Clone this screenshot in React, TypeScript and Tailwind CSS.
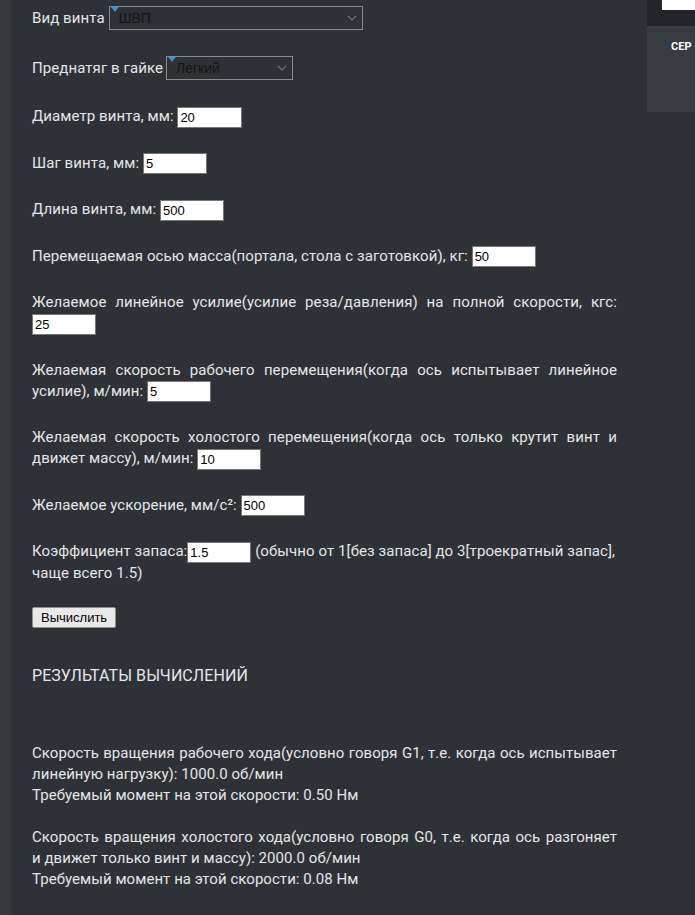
import React from "react";

const inputCls =
  "inline-block align-middle w-[64px] h-[21px] bg-white border border-[#767676] text-black text-[13px] pl-[2px] leading-[19px] tracking-normal [font-family:'Liberation_Sans',Arial,sans-serif]";

function Field({ value, className = "" }: { value: string; className?: string }) {
  return <span className={inputCls + " " + className}>{value}</span>;
}

function Select({ value, width }: { value: string; width: string }) {
  return (
    <span
      className={
        "relative inline-flex items-center align-middle h-[24px] border border-[#8a8a8a] text-[#141414] text-[14px] pl-[9px] tracking-normal [font-family:'Liberation_Sans',Arial,sans-serif] " +
        width
      }
    >
      <span className="absolute left-[1px] top-0 w-0 h-0 border-l-[4px] border-r-[4px] border-t-[5px] border-l-transparent border-r-transparent border-t-[#3d8fcf]" />
      <span>{value}</span>
      <svg
        className="absolute right-[5px] top-[8px]"
        width="10"
        height="6"
        viewBox="0 0 10 6"
        fill="none"
      >
        <path d="M1 1l4 4 4-4" stroke="#6f6f6f" strokeWidth="1.2" />
      </svg>
    </span>
  );
}

export default function App() {
  return (
    <div className="flex w-[695px] h-[915px] overflow-hidden bg-[#2e3135] [font-family:Roboto,'Noto_Sans',sans-serif]">
      <div className="w-[11px] shrink-0 bg-[#36393c]" />
      <main className="w-[636px] shrink-0 pl-[21px] pr-[30px] pt-[5px] text-[15px] text-[#e4e6e8] leading-[21px] tracking-[0.08px]">
        <div className="flex flex-col gap-[25px]">
          <div className="h-[26px] flex items-center gap-[4px]">
            <span>Вид винта</span>
            <Select value="ШВП" width="w-[254px]" />
          </div>
          <div className="h-[26px] flex items-center gap-[3px] -mt-[1px]">
            <span>Преднатяг в гайке</span>
            <Select value="Легкий" width="w-[127px]" />
          </div>
          <p>
            Диаметр винта, мм: <Field value="20" className="w-[65px]" />
          </p>
          <p>
            Шаг винта, мм: <Field value="5" />
          </p>
          <p>
            Длина винта, мм: <Field value="500" />
          </p>
          <p>
            Перемещаемая осью масса(портала, стола с заготовкой), кг: <Field value="50" />
          </p>
          <p className="text-justify">
            Желаемое линейное усилие(усилие реза/давления) на полной скорости, кгс:{" "}
            <Field value="25" />
          </p>
          <p className="text-justify">
            Желаемая скорость рабочего перемещения(когда ось испытывает линейное
            усилие), м/мин: <Field value="5" />
          </p>
          <p className="text-justify">
            Желаемая скорость холостого перемещения(когда ось только крутит винт и
            движет массу), м/мин: <Field value="10" />
          </p>
          <p>
            Желаемое ускорение, мм/с²: <Field value="500" />
          </p>
          <p>
            Коэффициент запаса:<Field value="1.5" /> (обычно от 1[без запаса] до
            3[троекратный запас], чаще всего 1.5)
          </p>
          <div className="leading-[0px] -mt-[2px]">
            <button className="h-[21px] px-[8px] bg-[#e9e9e9] border border-[#8f8f8f] rounded-[2px] text-black text-[13px] leading-[19px] tracking-normal [font-family:'Liberation_Sans',Arial,sans-serif]">
              Вычислить
            </button>
          </div>
        </div>
        <h3 className="mt-[37px] text-[16px] leading-[22px]">РЕЗУЛЬТАТЫ ВЫЧИСЛЕНИЙ</h3>
        <div className="mt-[56px] leading-[21px] tracking-[0.05px]">
          <p className="text-justify [text-align-last:justify]">
            Скорость вращения рабочего хода(условно говоря G1, т.е. когда ось испытывает
          </p>
          <p>линейную нагрузку): 1000.0 об/мин</p>
          <p>Требуемый момент на этой скорости: 0.50 Нм</p>
          <p className="h-[21px]" />
          <p className="text-justify [text-align-last:justify]">
            Скорость вращения холостого хода(условно говоря G0, т.е. когда ось разгоняет
          </p>
          <p>и движет только винт и массу): 2000.0 об/мин</p>
          <p>Требуемый момент на этой скорости: 0.08 Нм</p>
        </div>
      </main>
      <aside className="w-[48px] shrink-0 flex flex-col">
        <div className="h-[26px] bg-[#222529] pl-[15px]">
          <div className="h-[10px] bg-white" />
        </div>
        <div className="h-[86px] bg-[#383b3f] pl-[24px] pt-[7px] overflow-hidden">
          <span className="text-[11px] font-bold text-white whitespace-nowrap leading-[14px]">
            СЕР
          </span>
        </div>
      </aside>
    </div>
  );
}
